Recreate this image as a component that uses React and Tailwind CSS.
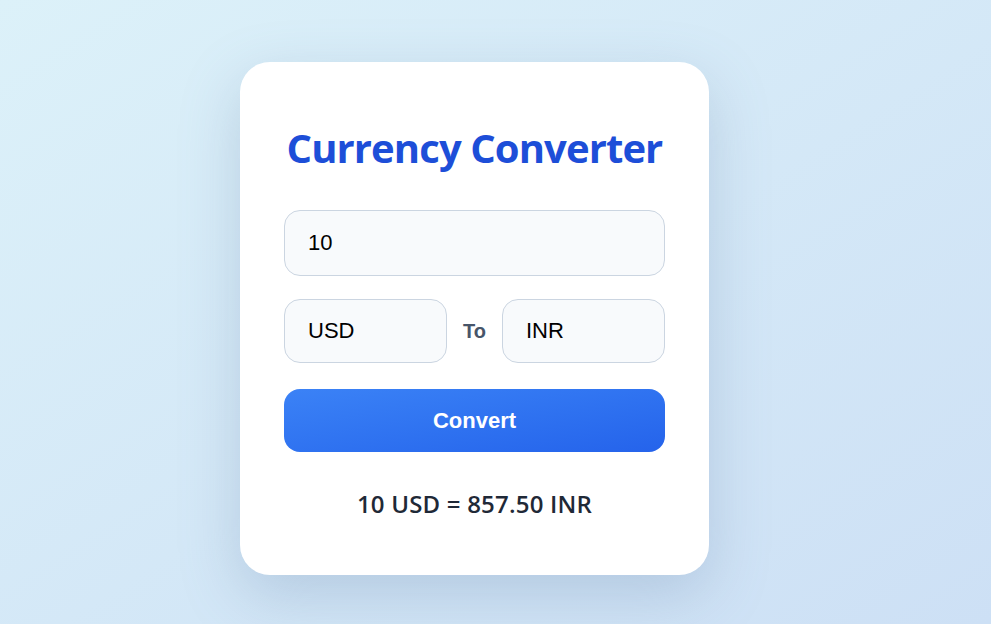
import React, { useState } from 'react';

const rates = { USD: 1, INR: 85.75, EUR: 0.92 };

const CurrencyConverter = () => {
    const [amount, setAmount] = useState('10');
    const [from, setFrom] = useState('USD');
    const [to, setTo] = useState('INR');
    const [result, setResult] = useState('10 USD = 857.50 INR');

    const handleConvert = () => {
        const r = (parseFloat(amount) || 0) * (rates[to] || 1) / (rates[from] || 1);
        setResult(`${amount} ${from} = ${r.toFixed(2)} ${to}`);
    };

    const field = "w-full h-full rounded-2xl border border-[#cbd5e1] bg-[#f8fafc] pl-[23px] text-[22px] text-black outline-none font-['Liberation_Sans',Arial,sans-serif]";

    return (
        <div className="min-h-screen bg-gradient-to-br from-[#dcf1f9] to-[#cde0f5] pt-[62px] pb-[50px]">
            <div className="ml-[240px] w-[469px] rounded-[30px] bg-white px-[44px] pt-[56px] pb-[56px] shadow-[0_20px_60px_rgba(100,130,170,0.28)]">
                <h1 className="-mx-4 whitespace-nowrap text-center text-[40px] font-bold leading-[60px] tracking-[-0.9px] text-[#1d4ed8] font-['Open_Sans',sans-serif]">
                    Currency Converter
                </h1>

                <div className="mt-[32px] h-[66px]">
                    <input value={amount} onChange={e => setAmount(e.target.value)} className={field} />
                </div>

                <div className="mt-[23px] flex h-[64px] items-center gap-4">
                    <div className="h-full flex-1">
                        <input value={from} onChange={e => setFrom(e.target.value)} className={field} />
                    </div>
                    <span className="text-[20px] font-bold text-[#475569] font-['Liberation_Sans',Arial,sans-serif]">To</span>
                    <div className="h-full flex-1">
                        <input value={to} onChange={e => setTo(e.target.value)} className={field} />
                    </div>
                </div>

                <button
                    onClick={handleConvert}
                    className="mt-[26px] h-[63px] w-full rounded-2xl bg-gradient-to-br from-[#3b82f6] to-[#2563eb] text-[22px] font-bold text-white font-['Liberation_Sans',Arial,sans-serif]"
                >
                    Convert
                </button>

                <p className="mt-[37px] text-center text-[24px] font-semibold leading-[30px] tracking-[0.2px] text-[#1f2937] font-['Open_Sans',sans-serif]">
                    {result}
                </p>
            </div>
        </div>
    );
};

export default CurrencyConverter;
